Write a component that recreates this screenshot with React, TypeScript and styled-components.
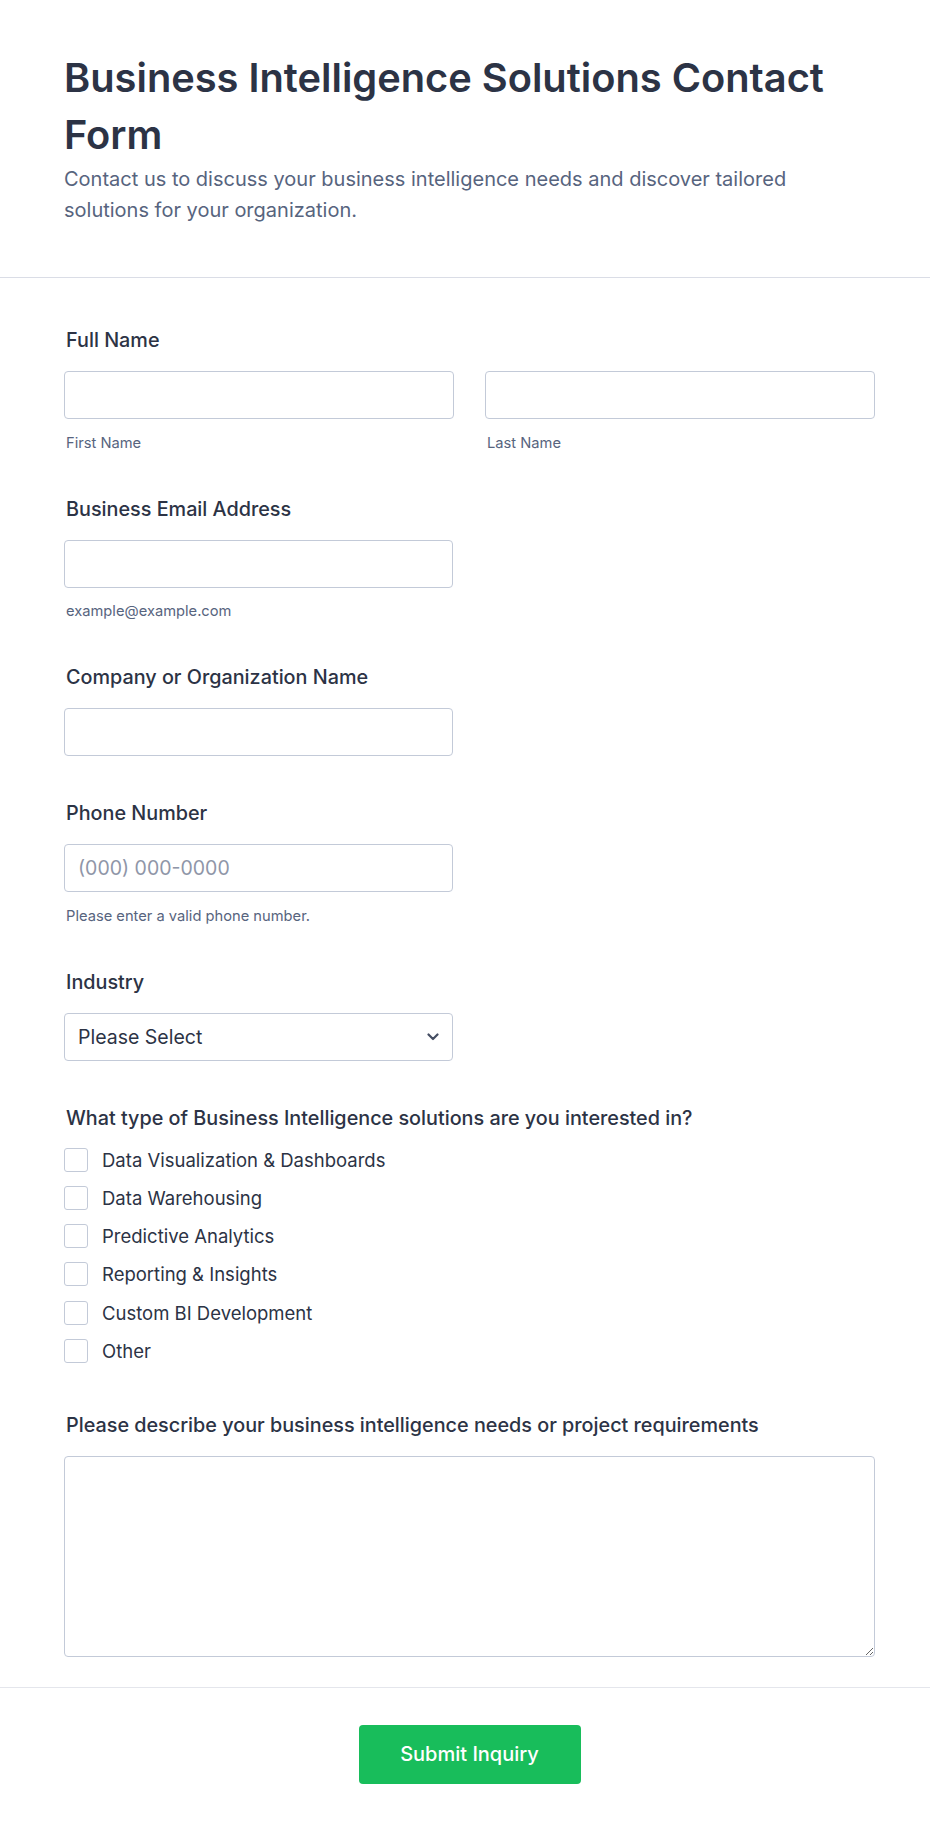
import React from 'react';
import styled, { createGlobalStyle } from 'styled-components';

const GlobalStyle = createGlobalStyle`
    * {
        box-sizing: border-box;
    }
    body {
        margin: 0;
        background: #fff;
        font-family: Inter, 'Noto Sans', 'DejaVu Sans', sans-serif;
        color: #2c3345;
    }
`;

export const Page = styled.div`
    width: 100%;
    background: #fff;
`;

export const Header = styled.header`
    padding: 49px 55px 51px 64px;
    border-bottom: 1px solid #dadde6;
`;

export const Title = styled.h1`
    margin: 0;
    font-size: 39.8px;
    line-height: 57px;
    font-weight: 600;
    color: #2c3345;
`;

export const Subtitle = styled.p`
    margin: 1px 0 0;
    max-width: 780px;
    font-size: 20px;
    line-height: 31px;
    color: #57647e;
`;

export const FormBody = styled.div`
    padding: 50px 55px 30px 64px;
    display: flex;
    flex-direction: column;
    gap: 45px;
`;

export const Field = styled.div<{ half?: boolean }>`
    display: flex;
    flex-direction: column;
    width: ${(p) => (p.half ? '389px' : '100%')};
`;

export const Label = styled.label`
    display: block;
    font-size: 19.8px;
    line-height: 24px;
    font-weight: 500;
    color: #2c3345;
    padding-left: 2px;
    margin-bottom: 19px;
`;

export const NameRow = styled.div`
    display: grid;
    grid-template-columns: 1fr 1fr;
    column-gap: 31px;
`;

export const SubField = styled.div`
    display: flex;
    flex-direction: column;
`;

export const TextInput = styled.input`
    width: 100%;
    height: 48px;
    border: 1px solid #c3cad8;
    border-radius: 4px;
    padding: 0 13px;
    font-family: inherit;
    font-size: 19.5px;
    color: #2c3345;
    background: #fff;
    &::placeholder {
        color: #8f96a8;
    }
    &:focus {
        outline: 0;
        border-color: #2e69ff;
    }
`;

export const SubLabel = styled.span`
    display: block;
    margin-top: 14.5px;
    padding-left: 2px;
    font-size: 14.7px;
    line-height: 18px;
    color: #57647e;
`;

export const SelectWrap = styled.div`
    position: relative;
    width: 100%;
`;

export const Select = styled.select`
    appearance: none;
    width: 100%;
    height: 48px;
    border: 1px solid #c3cad8;
    border-radius: 4px;
    padding: 0 40px 0 13px;
    font-family: inherit;
    font-size: 19.5px;
    color: #2c3345;
    background: #fff;
`;

export const Chevron = styled.svg`
    position: absolute;
    right: 14px;
    top: 20px;
    pointer-events: none;
`;

export const CheckList = styled.div`
    display: flex;
    flex-direction: column;
    gap: 14.3px;
    margin-top: -1px;
    padding-bottom: 5px;
`;

export const CheckRow = styled.label`
    display: flex;
    align-items: center;
    gap: 14px;
    height: 24px;
    font-size: 18.5px;
    color: #2c3345;
`;

export const Box = styled.span`
    width: 24px;
    height: 24px;
    flex: none;
    border: 1px solid #c3cad8;
    border-radius: 3px;
    background: #fff;
`;

export const TextArea = styled.textarea`
    width: 100%;
    height: 201px;
    border: 1px solid #c3cad8;
    border-radius: 4px;
    padding: 12px 14px;
    font-family: inherit;
    font-size: 18px;
    resize: vertical;
    &:focus {
        outline: 0;
    }
`;

export const Footer = styled.div`
    border-top: 1px solid #e4e6ec;
    padding: 37px 55px 50px 64px;
    display: flex;
    justify-content: center;
`;

export const SubmitButton = styled.button`
    width: 222px;
    height: 59px;
    border: none;
    border-radius: 4px;
    background: #18bd5b;
    color: #fff;
    font-family: inherit;
    font-size: 20px;
    font-weight: 500;
    cursor: pointer;
`;

const solutions = [
    'Data Visualization & Dashboards',
    'Data Warehousing',
    'Predictive Analytics',
    'Reporting & Insights',
    'Custom BI Development',
    'Other',
];

export default function App() {
    return (
        <Page>
            <GlobalStyle />
            <Header>
                <Title>Business Intelligence Solutions Contact Form</Title>
                <Subtitle>
                    Contact us to discuss your business intelligence needs and discover tailored solutions for your
                    organization.
                </Subtitle>
            </Header>

            <FormBody>
                <Field>
                    <Label>Full Name</Label>
                    <NameRow>
                        <SubField>
                            <TextInput type="text" />
                            <SubLabel>First Name</SubLabel>
                        </SubField>
                        <SubField>
                            <TextInput type="text" />
                            <SubLabel>Last Name</SubLabel>
                        </SubField>
                    </NameRow>
                </Field>

                <Field half>
                    <Label>Business Email Address</Label>
                    <TextInput type="email" />
                    <SubLabel>example@example.com</SubLabel>
                </Field>

                <Field half>
                    <Label>Company or Organization Name</Label>
                    <TextInput type="text" />
                </Field>

                <Field half>
                    <Label>Phone Number</Label>
                    <TextInput type="tel" placeholder="(000) 000-0000" />
                    <SubLabel>Please enter a valid phone number.</SubLabel>
                </Field>

                <Field half>
                    <Label>Industry</Label>
                    <SelectWrap>
                        <Select defaultValue="">
                            <option value="">Please Select</option>
                            <option>Finance</option>
                            <option>Healthcare</option>
                            <option>Retail</option>
                            <option>Technology</option>
                            <option>Other</option>
                        </Select>
                        <Chevron width="12" height="8" viewBox="0 0 12 8">
                            <path d="M1.5 1.5l4.5 4.5 4.5-4.5" fill="none" stroke="#454e63" strokeWidth="2.2" strokeLinecap="round" strokeLinejoin="round" />
                        </Chevron>
                    </SelectWrap>
                </Field>

                <Field>
                    <Label>What type of Business Intelligence solutions are you interested in?</Label>
                    <CheckList>
                        {solutions.map((s) => (
                            <CheckRow key={s}>
                                <Box />
                                {s}
                            </CheckRow>
                        ))}
                    </CheckList>
                </Field>

                <Field>
                    <Label>Please describe your business intelligence needs or project requirements</Label>
                    <TextArea />
                </Field>
            </FormBody>

            <Footer>
                <SubmitButton>Submit Inquiry</SubmitButton>
            </Footer>
        </Page>
    );
}
